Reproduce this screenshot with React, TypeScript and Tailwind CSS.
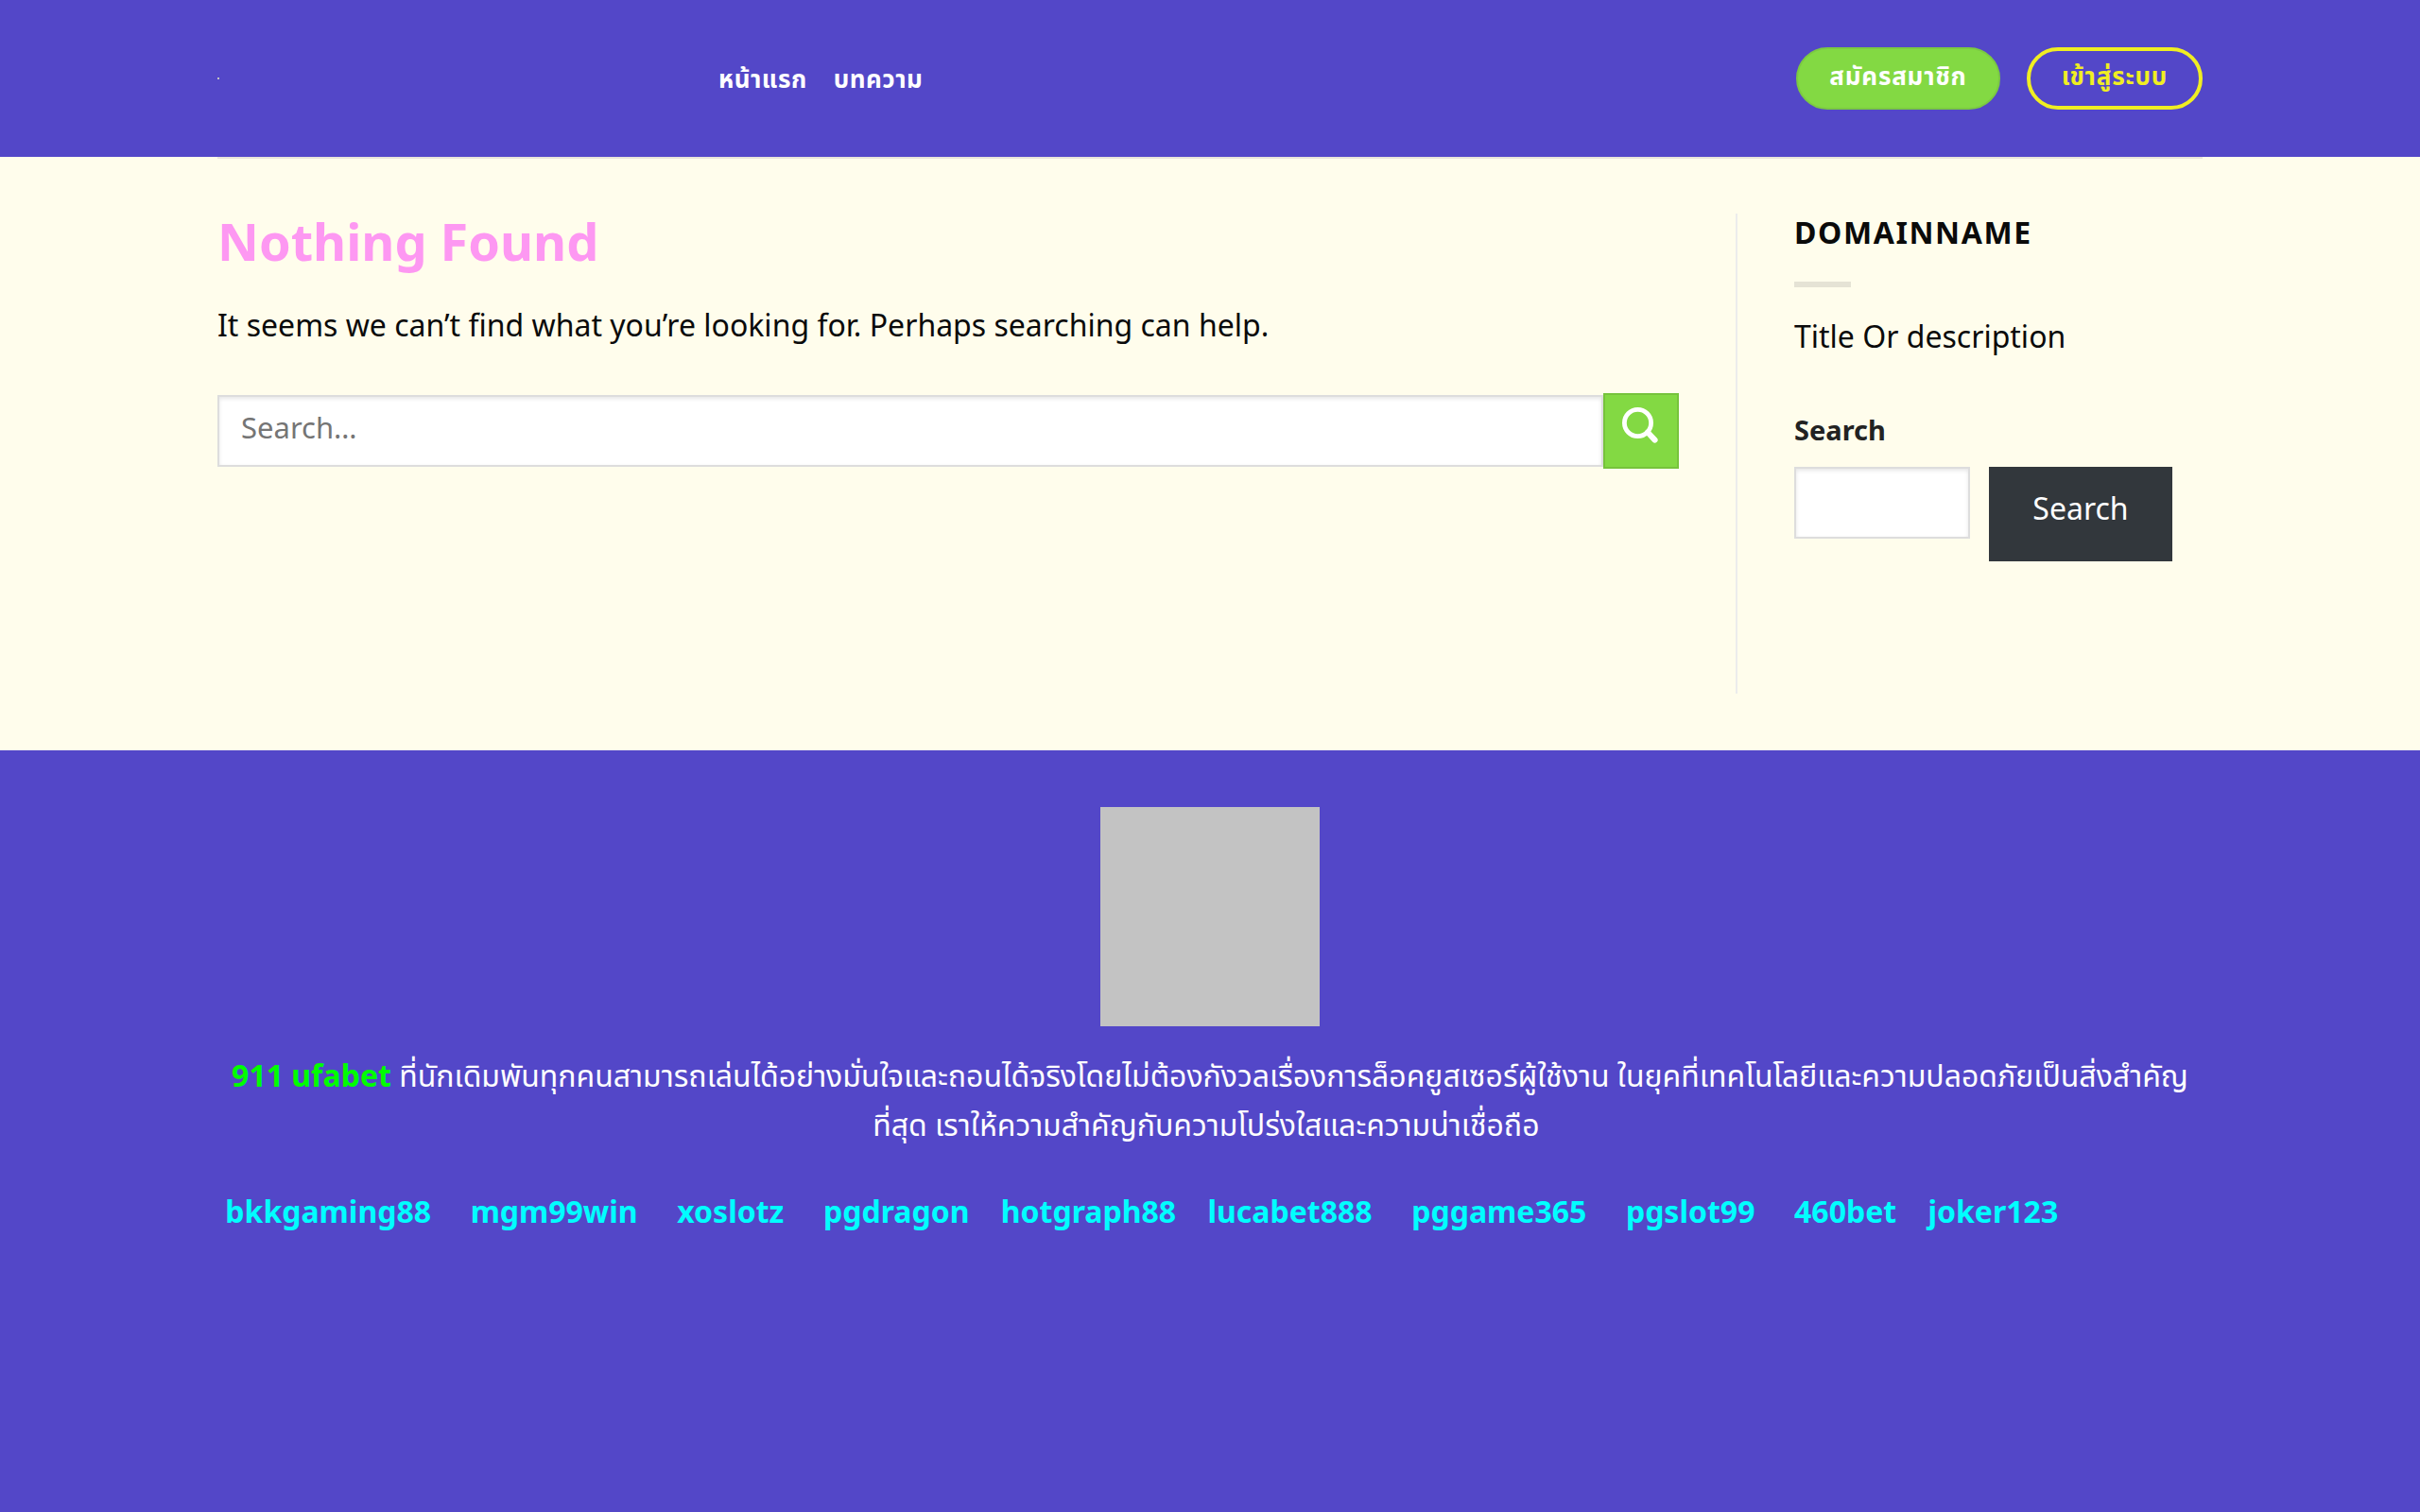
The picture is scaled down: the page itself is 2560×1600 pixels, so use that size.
const NAV_LINKS = ['หน้าแรก', 'บทความ'];

// `after` is the run of spaces that separates a link from the next one
const PARTNERS = [
  { label: 'bkkgaming88', after: 5 },
  { label: 'mgm99win', after: 5 },
  { label: 'xoslotz', after: 5 },
  { label: 'pgdragon', after: 4 },
  { label: 'hotgraph88', after: 4 },
  { label: 'lucabet888', after: 5 },
  { label: 'pggame365', after: 5 },
  { label: 'pgslot99', after: 5 },
  { label: '460bet', after: 4 },
  { label: 'joker123', after: 0 },
];

function SearchIcon() {
  return (
    <svg viewBox="0 0 40 38" className="h-[38px] w-10" fill="none" stroke="currentColor" aria-hidden="true">
      <circle cx="16.5" cy="16.5" r="14.1" strokeWidth="4.8" />
      <path d="M27 26.5 L34.6 34.6" strokeWidth="6" strokeLinecap="round" />
    </svg>
  );
}

function Header() {
  return (
    <header className="bg-[#5347c8]">
      <div className="mx-auto flex h-[166px] max-w-[2100px] items-center">
        <a href="#" aria-label="Home" className="w-[530px] shrink-0">
          <span className="block h-[2px] w-[2px] bg-[#c3c3c3]" />
        </a>
        <nav className="flex flex-1 gap-7">
          {NAV_LINKS.map((label) => (
            <a key={label} href="#" className="text-[26px] leading-[40px] font-bold tracking-[0.02em] text-white">
              {label}
            </a>
          ))}
        </nav>
        <div className="flex gap-7">
          <a
            href="#"
            className="flex h-[66px] items-center rounded-full border-2 border-[#7bc942] bg-[#83d943] px-[33px] pb-1.5 text-[26px] font-bold tracking-[0.03em] text-white"
          >
            สมัครสมาชิก
          </a>
          <a
            href="#"
            className="flex h-[66px] items-center rounded-full border-4 border-[#f0ee22] px-[33px] pb-1.5 text-[26px] font-bold tracking-[0.03em] text-[#f0ee22]"
          >
            เข้าสู่ระบบ
          </a>
        </div>
      </div>
    </header>
  );
}

function Results() {
  return (
    <section className="pr-[60px]">
      <h1 className="text-[54px] leading-[58px] font-bold text-[#fd98f2]">Nothing Found</h1>
      <p className="mt-[34px] text-[32px] leading-[52px]">
        It seems we can’t find what you’re looking for. Perhaps searching can help.
      </p>
      <form className="mt-[46px] flex items-center" onSubmit={(e) => e.preventDefault()}>
        <input
          type="search"
          aria-label="Search"
          placeholder="Search…"
          className="h-[76px] min-w-0 flex-1 border-2 border-[#dddddd] bg-white px-[23px] pb-2 text-[31px] shadow-[inset_0_2px_4px_rgba(0,0,0,0.1)] placeholder:text-[#757575]"
        />
        <button
          type="submit"
          aria-label="Submit"
          className="flex h-20 w-20 justify-center border-2 border-[#76c33c] bg-[#83d943] pt-[13px] text-white"
        >
          <SearchIcon />
        </button>
      </form>
    </section>
  );
}

function Sidebar() {
  return (
    <aside className="min-h-[508px] border-l-2 border-[#ececec] pl-[60px]">
      <h2 className="text-[32px] leading-[40px] font-bold tracking-[0.05em] uppercase">Domainname</h2>
      <div className="mt-8 h-[6px] w-[60px] bg-[#e5e3d5]" />
      <p className="mt-[26px] text-[32px] leading-[52px]">Title Or description</p>
      <form className="mt-[50px]" onSubmit={(e) => e.preventDefault()}>
        <label htmlFor="side-search" className="block text-[29px] leading-[46px] font-bold text-[#222222]">
          Search
        </label>
        <div className="mt-4 flex items-start gap-5">
          <input
            id="side-search"
            type="search"
            className="h-[76px] w-[186px] border-2 border-[#dddddd] bg-white px-[23px] text-[31px] shadow-[inset_0_2px_4px_rgba(0,0,0,0.1)]"
          />
          <button type="submit" className="h-[100px] w-[194px] bg-[#32373c] pb-3 text-[32px] text-white">
            Search
          </button>
        </div>
      </form>
    </aside>
  );
}

function Footer() {
  return (
    <footer className="flex-1 bg-[#5347c8] pt-[60px] text-[32px] leading-[52px] text-white">
      <div className="mx-auto max-w-[2100px]">
        <div className="mx-auto h-[232px] w-[232px] bg-[#c3c3c3]" />
        <p className="mt-[26px] text-center">
          <a href="#" className="font-bold text-[#00ff00]">
            911 ufabet
          </a>{' '}
          ที่นักเดิมพันทุกคนสามารถเล่นได้อย่างมั่นใจและถอนได้จริงโดยไม่ต้องกังวลเรื่องการล็อคยูสเซอร์ผู้ใช้งาน
          ในยุคที่เทคโนโลยีและความปลอดภัยเป็นสิ่งสำคัญที่สุด เราให้ความสำคัญกับความโปร่งใสและความน่าเชื่อถือ&nbsp;
        </p>
        <p className="mt-10 whitespace-pre-wrap">
          {' '}
          {PARTNERS.map(({ label, after }) => (
            <span key={label}>
              <a href="#" className="font-bold text-[#00ffff]">
                {label}
              </a>
              {' '.repeat(after)}
            </span>
          ))}
        </p>
      </div>
    </footer>
  );
}

export default function App() {
  return (
    <div className="flex min-h-screen flex-col bg-[#fffdec] font-['Noto_Sans','Noto_Sans_Thai',sans-serif] text-[#0a0a0a]">
      <Header />
      <div className="mx-auto w-full max-w-[2100px] border-t-2 border-[#e8e5da]" />
      <main className="mx-auto grid w-full max-w-[2100px] grid-cols-[1fr_494px] pt-[58px] pb-[60px]">
        <Results />
        <Sidebar />
      </main>
      <Footer />
    </div>
  );
}
